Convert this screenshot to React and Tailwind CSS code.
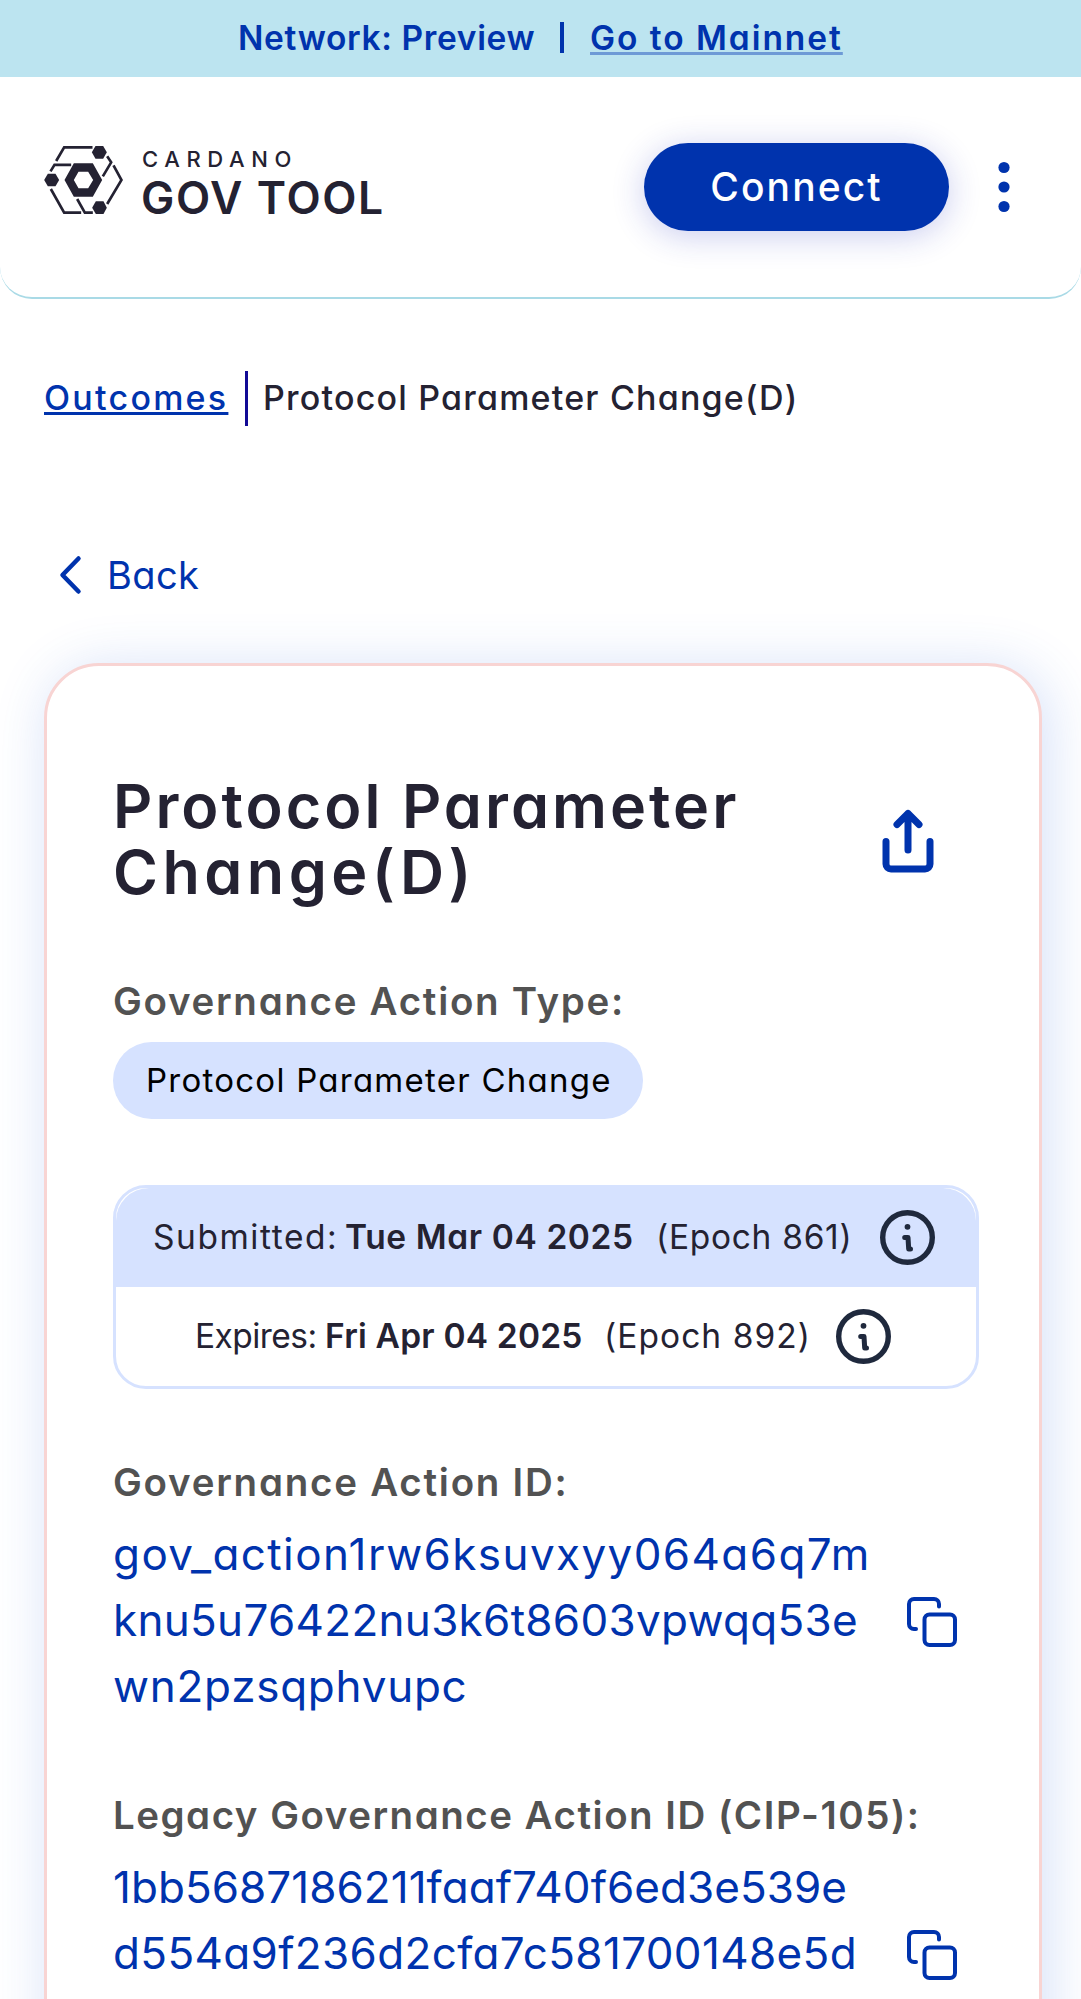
function LogoMark() {
  return (
    <svg className="h-[68px] w-[79px] shrink-0" viewBox="132 138 236 204" fill="none">
      <g stroke="#242232" strokeWidth="8">
        <path d="M168 183 192 142H277" />
        <path d="M151 214 163 194.500H213" />
        <path d="M321 169 333 187 308 229" />
        <path d="M340 196 364 240 321 312" />
        <path d="M152 267 192 338H243" />
        <path d="M231 297 254 338H278" />
      </g>
      <g fill="#242232">
        <path
          fillRule="evenodd"
          d="M193 240 221 190H278L306 240 278 290H221ZM221 240 235 265H264L279 240 264 215H235Z"
        />
        <path d="M275 157 286 138H309L320 157 309 176H286Z" />
        <path d="M132 240 143 221H166L177 240 166 259H143Z" />
        <path d="M276 323 287 304H310L320 323 310 342H287Z" />
      </g>
    </svg>
  );
}

function InfoIcon() {
  return (
    <svg className="h-[55px] w-[55px] shrink-0" viewBox="-27.5 -27.5 55 55" fill="none">
      <circle r="24.800" stroke="#1f293d" strokeWidth="5.400" />
      <circle cy="-10.700" r="2.900" fill="#1f293d" />
      <path
        d="M-2.800 0H.5L1.200 11.500H3"
        stroke="#1f293d"
        strokeWidth="5"
        strokeLinecap="round"
        strokeLinejoin="round"
      />
    </svg>
  );
}

function CopyIcon() {
  return (
    <svg
      className="mt-[5px] h-[52px] w-[52px] shrink-0"
      viewBox="0 0 52 52"
      fill="none"
      stroke="#0033ad"
      strokeWidth="4"
      strokeLinecap="round"
    >
      <rect x="18.500" y="18.500" width="30.500" height="30.500" rx="5" />
      <path d="M33 10.500V8a5 5 0 0 0-5-5H8a5 5 0 0 0-5 5V28a5 5 0 0 0 5 5H10" />
    </svg>
  );
}

function ShareIcon() {
  return (
    <svg
      className="mt-[4px] h-[66px] w-[66px] shrink-0"
      viewBox="0 0 66 66"
      fill="none"
      stroke="#0033ad"
      strokeWidth="7"
      strokeLinecap="round"
      strokeLinejoin="round"
    >
      <path d="M11 33.500V56a5 5 0 0 0 5 5H50a5 5 0 0 0 5-5V33.500" />
      <path d="M33 42V5.500M22 16.500 33 5.500 44 16.500" />
    </svg>
  );
}

function Label({ children, className }) {
  return (
    <div
      className={`h-[58px] whitespace-nowrap text-[38.5px] leading-[58px] font-semibold text-[#525252] ${className}`}
    >
      {children}
    </div>
  );
}

function IdBlock({ children }) {
  return (
    <div className="mt-[9px] flex h-[199px] items-center justify-between pr-[21px] text-[44px] leading-[66px] text-[#0033ad]">
      <div className="h-[198px] whitespace-nowrap">{children}</div>
      <CopyIcon />
    </div>
  );
}

export default function App() {
  return (
    <div className="h-[1999px] w-full overflow-hidden bg-white font-['Inter','Noto_Sans',sans-serif] text-[#242232] [font-feature-settings:'cv11']">
      <div className="flex h-[77px] items-center bg-[#bce4f0] pb-[2px] pl-[238px] text-[33.5px] leading-[40px] font-semibold whitespace-nowrap text-[#0033ad]">
        <span className="w-[312px] tracking-[0.65px]">Network: Preview</span>
        <span className="flex w-[40px] pl-[10px]">
          <span className="h-[31px] w-[4px] bg-[#0033ad]" />
        </span>
        <a className="tracking-[1.95px] underline decoration-[#6e9ad6] decoration-[3px] underline-offset-[2px] [text-decoration-skip-ink:none]">
          Go to Mainnet
        </a>
      </div>

      <header className="flex h-[222px] items-center rounded-b-[32px] border-b-[2px] border-[#a9dae6] pl-[44px]">
        <div className="-mt-[15px] flex h-[68px] items-start">
          <LogoMark />
          <div className="ml-[18px] flex w-[239px] flex-col whitespace-nowrap">
            <span className="mt-px ml-px h-[25px] text-[22px] leading-[24px] font-medium tracking-[6.6px]">
              CARDANO
            </span>
            <span className="h-[52px] text-[44.5px] leading-[52px] font-semibold tracking-[1.6px]">
              GOV TOOL
            </span>
          </div>
        </div>
        <button className="ml-[264px] h-[88px] w-[305px] rounded-full bg-[#0033ad] text-[39px] font-medium tracking-[2.1px] text-white shadow-[0_5px_33px_rgba(34,48,190,0.24)]">
          Connect
        </button>
        <svg className="ml-[44px] h-[52px] w-[22px]" viewBox="0 0 22 52" fill="#0033ad">
          <circle cx="11" cy="6.500" r="5.600" />
          <circle cx="11" cy="26" r="5.600" />
          <circle cx="11" cy="45.500" r="5.600" />
        </svg>
      </header>

      <nav className="mt-[72px] flex h-[55px] items-center pl-[44px] text-[34px] leading-[40px] font-medium whitespace-nowrap">
        <a className="-mt-px w-[201px] text-[#0033ad]">
          <span className="tracking-[2.25px] underline decoration-[3px] underline-offset-[2px]">
            Outcomes
          </span>
        </a>
        <span className="h-[55px] w-[3px] bg-[#120a95]" />
        <span className="-mt-px ml-[15px] tracking-[1.2px]">Protocol Parameter Change(D)</span>
      </nav>

      <div className="mt-[121px] flex h-[56px] items-center pl-[58px] text-[38px] leading-[56px] text-[#0033ad]">
        <svg
          className="h-[44px] w-[24px]"
          viewBox="0 0 24 44"
          fill="none"
          stroke="currentColor"
          strokeWidth="4.500"
          strokeLinecap="round"
          strokeLinejoin="round"
        >
          <path d="M20.500 5.500 4.500 22 20.500 38.500" />
        </svg>
        <span className="ml-[25px] tracking-[0.4px]">Back</span>
      </div>

      <main className="mt-[60px] ml-[44px] h-[1500px] w-[998px] rounded-[55px] border-[3px] border-[#f8d4d3] bg-white pt-[107px] pr-[60px] pl-[66px] shadow-[5.5px_5.5px_55px_rgba(47,98,220,0.2)]">
        <div className="flex h-[132px] items-center justify-between pr-[38px]">
          <h1 className="text-[61px] leading-[66px] font-semibold whitespace-nowrap">
            <span className="block tracking-[3.050px]">Protocol Parameter</span>
            <span className="block tracking-[4.5px]">Change(D)</span>
          </h1>
          <ShareIcon />
        </div>

        <Label className="mt-[67px] tracking-[1.7px]">Governance Action Type:</Label>
        <div className="mt-[12px] flex h-[77px] w-[530px] items-center rounded-full bg-[#d6e2ff] pl-[33px] text-[33px] whitespace-nowrap text-black">
          <span className="tracking-[1.25px]">Protocol Parameter Change</span>
        </div>

        <div className="mt-[66px] flex h-[204px] w-[866px] flex-col rounded-[33px] border-[3px] border-[#d6e2ff] text-[33.5px] whitespace-nowrap">
          <div className="flex h-[99px] shrink-0 items-center rounded-t-[33px] bg-[#d6e2ff] pl-[37px]">
            <span className="w-[192px] tracking-[1.55px]">Submitted:</span>
            <span className="w-[311px] font-semibold tracking-[0.6px]">Tue Mar 04 2025</span>
            <span className="w-[224px] tracking-[0.7px]">(Epoch 861)</span>
            <InfoIcon />
          </div>
          <div className="flex h-[99px] items-center pl-[79px]">
            <span className="w-[130px] tracking-[-0.55px]">Expires:</span>
            <span className="w-[279px] font-semibold tracking-[0.2px]">Fri Apr 04 2025</span>
            <span className="w-[232px] tracking-[1.05px]">(Epoch 892)</span>
            <InfoIcon />
          </div>
        </div>

        <Label className="mt-[64px] tracking-[1.75px]">Governance Action ID:</Label>
        <IdBlock>
          <span className="block tracking-[1.4px]">gov_action1rw6ksuvxyy064a6q7m</span>
          <span className="block tracking-[0.3px]">knu5u76422nu3k6t8603vpwqq53e</span>
          <span className="block tracking-[0.75px]">wn2pzsqphvupc</span>
        </IdBlock>

        <Label className="mt-[67px] tracking-[1.5px]">Legacy Governance Action ID (CIP-105):</Label>
        <IdBlock>
          <span className="block tracking-[0.05px]">1bb5687186211faaf740f6ed3e539e</span>
          <span className="block tracking-[0.35px]">d554a9f236d2cfa7c581700148e5d</span>
        </IdBlock>
      </main>
    </div>
  );
}
